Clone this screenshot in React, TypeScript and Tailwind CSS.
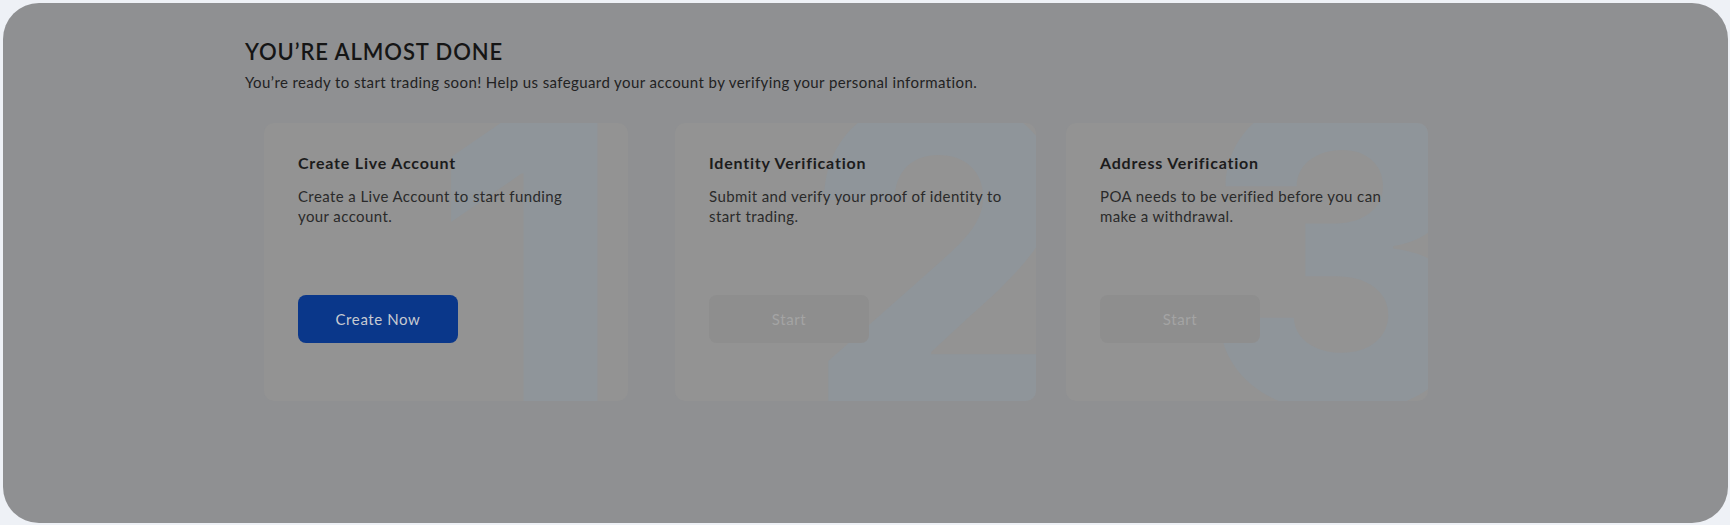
import React from "react";

type Step = {
  n: string;
  title: string;
  text: string;
  action: string;
  active: boolean;
  width: string;
  margin: string;
  textWidth: string;
  digit: string;
};

const steps: Step[] = [
  {
    n: "1",
    title: "Create Live Account",
    text: "Create a Live Account to start funding your account.",
    action: "Create Now",
    active: true,
    width: "w-[364px]",
    margin: "",
    textWidth: "w-[285px]",
    digit: "left-[168px] -top-[72px]",
  },
  {
    n: "2",
    title: "Identity Verification",
    text: "Submit and verify your proof of identity to start trading.",
    action: "Start",
    active: false,
    width: "w-[361px]",
    margin: "ml-[47px]",
    textWidth: "w-[302px]",
    digit: "left-[130px] -top-[80px]",
  },
  {
    n: "3",
    title: "Address Verification",
    text: "POA needs to be verified before you can make a withdrawal.",
    action: "Start",
    active: false,
    width: "w-[362px]",
    margin: "ml-[30px]",
    textWidth: "w-[302px]",
    digit: "left-[135px] -top-[85px]",
  },
];

function StepCard({ step }: { step: Step }) {
  return (
    <div
      className={`relative h-[278px] overflow-hidden rounded-[10px] bg-[#939393] ${step.width} ${step.margin}`}
    >
      {/* big faded step number behind the content */}
      <span
        className={`pointer-events-none absolute select-none font-['Inter',sans-serif] text-[430px] font-extrabold leading-none text-[#8f959a] ${step.digit}`}
      >
        {step.n}
      </span>

      <div className="relative flex h-full flex-col pl-[34px] pt-[28px]">
        <h2 className="text-[16px] font-bold leading-[24px] tracking-[0.8px] text-[#1c1c1c]">
          {step.title}
        </h2>
        <p
          className={`mt-[11px] text-[15px] leading-[20px] tracking-[0.4px] text-[#2a2a2a] ${step.textWidth}`}
        >
          {step.text}
        </p>
        <button
          className={`mt-[69px] h-[48px] w-[160px] rounded-[8px] text-[15px] tracking-[0.6px] ${
            step.active ? "bg-[#0a378a] text-[#c7cad1]" : "bg-[#8e8e8e] text-[#a4a4a4]"
          }`}
        >
          {step.action}
        </button>
      </div>
    </div>
  );
}

export default function App() {
  return (
    <div className="h-[525px] w-[1730px] bg-[#eef1f6] p-[3px] font-['Lato',sans-serif]">
      <div className="h-[520px] w-[1725px] overflow-hidden rounded-[36px] bg-[#8f9092] pl-[242px] pt-[35px]">
        <h1 className="text-[22px] font-semibold leading-[28px] tracking-[0.9px] text-[#151515]">
          YOU’RE ALMOST DONE
        </h1>
        <p className="mt-[6px] text-[15px] leading-[20px] tracking-[0.4px] text-[#222]">
          You’re ready to start trading soon! Help us safeguard your account by verifying your personal
          information.
        </p>

        <div className="mt-[31px] flex pl-[19px]">
          {steps.map((s) => (
            <StepCard key={s.n} step={s} />
          ))}
        </div>
      </div>
    </div>
  );
}
